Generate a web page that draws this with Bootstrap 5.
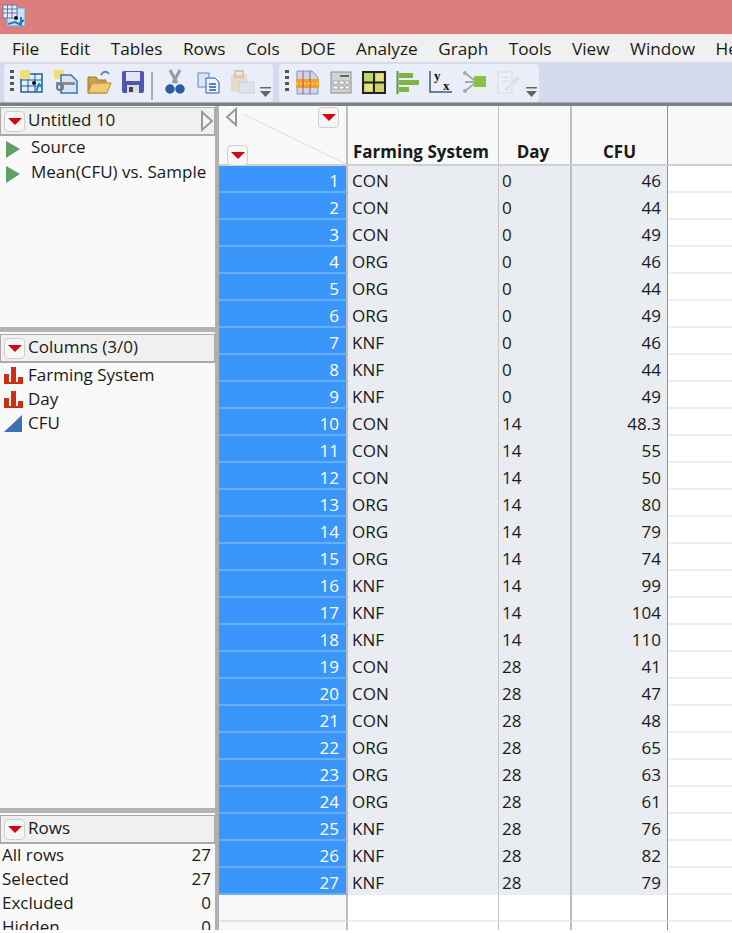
<!doctype html>
<html lang="en">
<head>
<meta charset="utf-8">
<title>Untitled 10</title>
<link href="https://cdn.jsdelivr.net/npm/bootstrap@5.3.0/dist/css/bootstrap.min.css" rel="stylesheet">
<style>
html,body{height:933px;overflow:hidden}
body{font-family:"Open Sans","Noto Sans","Liberation Sans",sans-serif;font-size:17px;color:#1a1a1a;background:#fff;width:732px}
.titlebar{height:34px;background:#de7d7d;padding:4px 0 0 2px}
.menubar{height:28px;background:#f0f0f0;padding-left:12px;gap:20.5px;font-size:17.2px;line-height:30px;white-space:nowrap;overflow:hidden}
.toolstrip{height:42px;background:#d5dbec;padding:2px 0 0 4px;gap:6px;border-bottom:2px solid #a3abcf}
.toolgroup{height:38px;background:#eaeef8;border-radius:4px;padding:5px 0 0 4px;position:relative}
.grip{width:4px;height:24px;margin:1px 5px 0 2px;background:repeating-linear-gradient(#555 0 3px,transparent 3px 6px)}
.tico{width:26px;height:26px;display:block;flex:none}
.tgap{margin-right:7.5px}
.overflowmark{width:18px;align-self:flex-end;padding:0 0 3px 4px;height:15px;flex:none}
.sep{width:2px;height:28px;background:#a9adb5;margin:0 9.500px 0 5px}
.mainarea{height:827px;border-top:3px solid #7f7f7f;margin-top:-1px;overflow:hidden}
.leftpane{width:215px;flex:none;background:#f9f9f9}
.splitv{width:4px;flex:none;background:#b0b0b0}
.splith{height:5px;flex:none;background:#b4b4b4}
.panelhead{height:29px;flex:none;background:#f0f0f0;border:1px solid #aaa;border-bottom-width:2px;font-size:17px;line-height:24px;padding:0 0 0 3px;gap:3px;margin-top:2px}
.panelfirst{margin-top:1px}
.redbtn{width:21px;height:21px;flex:none;background:#f7f5f5;border:1px solid #cfcfcf;border-radius:4px;display:flex;align-items:center;justify-content:center}
.redbtn::after{content:"";border:7px solid transparent;border-top:7px solid #d4070f;border-bottom:0}
.tree1{height:191px;flex:none}
.tree2{height:445px;flex:none}
.itemrow{height:24px;line-height:22px;gap:5px;padding-left:4px;white-space:nowrap}
.treerow{height:25px}
.liftup{padding-bottom:3px}
.statrow{height:24px;line-height:22px;padding:0 4px 0 2px;flex:none}
.gridwrap{flex:1;min-width:0;position:relative}
.headrow{height:60px;background:#f8f8f8;border-bottom:2px solid #cfcfcf}
.datarow{height:27px;line-height:30px}
.c0{width:129px;flex:none;border-right:2px solid #bdbdbd}
.c1{width:151px;flex:none;border-right:1px solid #c4c4c4;padding-left:4px}
.c2{width:73px;flex:none;border-right:2px solid #bdbdbd;padding-left:3px}
.c3{width:96px;flex:none;border-right:1px solid #8f8f8f;text-align:right;padding-right:6px}
.c4{flex:1;border-bottom:2px solid #eeeeee}
.headrow .c0{position:relative}
.headrow .c1,.headrow .c2,.headrow .c3{background:#f8f8f8;font-weight:700;font-size:17px;align-self:stretch;display:flex;align-items:flex-end;justify-content:center;padding:0;line-height:24px;white-space:nowrap}
.headrow .c1{padding-right:4px}
.headrow .c2{padding-right:3px}
.headrow .c4{border:0}
.rownum{background:#3b96fb;color:#fff;text-align:right;padding-right:7px;border-bottom:2px solid #69aef8;border-right-color:#bdbdbd}
.datarow .c1,.datarow .c2,.datarow .c3{background:#e9ecf0}
.blankrow .c0{background:#f8f8f8;border-bottom:2px solid #e3e3e3}
.datarow.blankrow .c1,.datarow.blankrow .c2,.datarow.blankrow .c3{background:#fff;border-bottom:2px solid #eeeeee}
.diag{position:absolute;left:0;top:0;width:127px;height:58px}
.corner-a{position:absolute;left:8px;top:39px}
.corner-b{position:absolute;right:7px;top:1px}
.svgletter{font-family:"Liberation Serif",serif;font-weight:700;font-size:13px;fill:#111}
</style>
</head>
<body>
<div class="titlebar">
<svg class="d-block" width="24" height="24" viewBox="0 0 24 24"><rect x="5" y="4" width="18" height="18" fill="#cfe2f5" stroke="#7d9cc4"/><rect x="1" y="1" width="14" height="13" fill="#e8eef8" stroke="#5c7aa8"/><path d="M1 5h14M1 9h14M5.500 1v13M10 1v13" stroke="#5c7aa8"/><circle cx="14" cy="14" r="2" fill="#111"/><path d="M6 20l7-2 4 2 5-4" stroke="#1f7fc4" stroke-width="2" fill="none"/><path d="M19 13v9" stroke="#1f7fc4" stroke-width="2"/></svg>
</div>
<div class="menubar d-flex"><span>File</span><span>Edit</span><span>Tables</span><span>Rows</span><span>Cols</span><span>DOE</span><span>Analyze</span><span>Graph</span><span>Tools</span><span>View</span><span>Window</span><span>Help</span></div>
<div class="toolstrip d-flex">
 <div class="toolgroup d-flex">
  <div class="grip"></div>
  <svg class="tico tgap" viewBox="0 0 26 26"><rect x="2" y="5" width="21" height="18" fill="#e6eef8" stroke="#1e5f9e" stroke-width="1.500"/><path d="M2 11h21M2 17h21M9 5v18M16 5v18" stroke="#1e5f9e"/><rect x="1" y="1" width="10" height="9" fill="#f2dd78"/><circle cx="15" cy="14" r="2" fill="#111"/><path d="M17 23l3-8 3 3" stroke="#1f7fc4" stroke-width="2" fill="none"/></svg>
  <svg class="tico tgap" viewBox="0 0 26 26"><rect x="1" y="1" width="10" height="9" fill="#f2dd78"/><path d="M8 6h10l6 6v12H8z" fill="#d6e6f5" stroke="#3478ad" stroke-width="1.500"/><rect x="3" y="13" width="19" height="3" fill="#8c8c8c"/><circle cx="7" cy="18" r="3" fill="none" stroke="#777" stroke-width="2"/></svg>
  <svg class="tico tgap" viewBox="0 0 26 26"><path d="M2 24V8h8l2 3h8v13z" fill="#c9a24a" stroke="#9a7a30"/><path d="M2 24l4-10h19l-4 10z" fill="#f0cb73" stroke="#b08d3c"/><path d="M15 6c2-4 6-4 8-1" stroke="#5f86b5" stroke-width="2" fill="none"/></svg>
  <svg class="tico" viewBox="0 0 26 26"><rect x="2" y="2" width="22" height="22" rx="2" fill="#4f55b8"/><rect x="6" y="3" width="14" height="9" fill="#e6e6f2"/><rect x="7" y="16" width="12" height="8" fill="#dcdcdc"/><rect x="9" y="18" width="4" height="5" fill="#444"/></svg>
  <div class="sep align-self-center"></div>
  <svg class="tico tgap" viewBox="0 0 26 26"><path d="M8 1l7 13M18 1l-7 13" stroke="#8d9bb0" stroke-width="3"/><circle cx="8" cy="20" r="3.500" fill="#2a5ba8" stroke="#2a5ba8" stroke-width="2.500"/><circle cx="18" cy="20" r="3.500" fill="#2a5ba8" stroke="#2a5ba8" stroke-width="2.500"/></svg>
  <svg class="tico tgap" viewBox="0 0 26 26"><path d="M2 4h11v14H2z" fill="#dbe6f6" stroke="#5c86c0"/><path d="M10 9h9l4 4v11H10z" fill="#eef3fb" stroke="#2a5ba8"/><path d="M13 15h7M13 18h7M13 21h7" stroke="#2a5ba8" stroke-width="1.500"/></svg>
  <svg class="tico" viewBox="0 0 26 26"><rect x="2" y="5" width="16" height="18" rx="2" fill="#e6dcc4"/><rect x="6" y="2" width="8" height="6" fill="none" stroke="#d4c9b0" stroke-width="2"/><rect x="10" y="13" width="15" height="11" fill="#dfe3ea" stroke="#ccd"/></svg>
  <svg class="overflowmark" viewBox="0 0 14 12"><rect x="1" y="0" width="11" height="1.500" fill="#666"/><path d="M1 4h11l-5.500 6z" fill="#666"/></svg>
 </div>
 <div class="toolgroup d-flex">
  <div class="grip"></div>
  <svg class="tico tgap" viewBox="0 0 26 26"><path d="M3 2h15l6 6v17H3z" fill="#c9d6ec" stroke="#7d96c4"/><path d="M2 10h23v9H2z" fill="#f0a030"/><path d="M9 2v23M16 2v23" stroke="#c05555"/><path d="M2 14.500h23" stroke="#f3d26a" stroke-dasharray="2 2" stroke-width="2"/></svg>
  <svg class="tico tgap" viewBox="0 0 26 26"><rect x="3" y="3" width="20" height="21" fill="#d2d2d2" stroke="#8a8a8a"/><rect x="12" y="6" width="9" height="2" fill="#666"/><path d="M5 12h5v3H5zM11 12h5v3h-5zM17 12h4v3h-4zM5 17h5v3H5zM11 17h5v3h-5zM17 17h4v3h-4z" fill="#fafafa" stroke="#777" stroke-width=".5"/></svg>
  <svg class="tico tgap" viewBox="0 0 26 26"><rect x="2" y="3" width="22" height="21" fill="#c6d36a" stroke="#222" stroke-width="2"/><path d="M13 3v21M2 13.500h22" stroke="#222" stroke-width="2"/><rect x="15" y="5" width="7" height="7" fill="#e8e27a"/><rect x="4" y="15" width="7" height="7" fill="#e8e27a"/></svg>
  <svg class="tico tgap" viewBox="0 0 26 26"><path d="M2.500 2v23" stroke="#5d9a38" stroke-width="2"/><rect x="4" y="4" width="14" height="5" fill="#7eb445"/><rect x="4" y="11" width="20" height="5" fill="#7eb445"/><rect x="4" y="18" width="10" height="5" fill="#7eb445"/></svg>
  <svg class="tico tgap" viewBox="0 0 26 26"><path d="M2 2v21h22" fill="none" stroke="#3b5a86" stroke-width="1.500"/><text class="svgletter" x="6" y="11">y</text><text class="svgletter" x="15" y="21">x</text></svg>
  <svg class="tico tgap" viewBox="0 0 26 26"><rect x="12" y="7" width="12" height="11" fill="#8bbf3e"/><path d="M3 4l9 7M3 13h9M3 22l9-7" stroke="#a5a9b3" stroke-width="2"/><circle cx="3" cy="4" r="2" fill="#a5a9b3"/><circle cx="3" cy="22" r="2" fill="#a5a9b3"/></svg>
  <svg class="tico" viewBox="0 0 26 26"><rect x="3" y="3" width="14" height="21" fill="#eceff4" stroke="#d6d9de"/><path d="M7 8h7M7 12h7" stroke="#d6d9de"/><path d="M9 20l13-13 3 3-14 12z" fill="#dfe2e6"/></svg>
  <svg class="overflowmark" viewBox="0 0 14 12"><rect x="1" y="0" width="11" height="1.500" fill="#666"/><path d="M1 4h11l-5.500 6z" fill="#666"/></svg>
 </div>
</div>
<div class="mainarea d-flex">
 <div class="leftpane d-flex flex-column">
  <div class="panelhead panelfirst d-flex align-items-center"><span class="redbtn"></span><span class="flex-grow-1 liftup">Untitled 10</span><svg width="14" height="22" viewBox="0 0 14 22"><path d="M2 2l10 9-10 9z" fill="#f4f4f4" stroke="#999" stroke-width="2"/></svg></div>
  <div class="tree1">
   <div class="itemrow treerow d-flex align-items-center"><svg width="18" height="20" viewBox="0 0 18 20"><path d="M2 2l14 8-14 9z" fill="#5f9f63"/></svg><span class="ms-1 liftup">Source</span></div>
   <div class="itemrow treerow d-flex align-items-center"><svg width="18" height="20" viewBox="0 0 18 20"><path d="M2 2l14 8-14 9z" fill="#5f9f63"/></svg><span class="ms-1 liftup">Mean(CFU) vs. Sample</span></div>
  </div>
  <div class="splith"></div>
  <div class="panelhead d-flex align-items-center"><span class="redbtn"></span><span class="liftup">Columns (3/0)</span></div>
  <div class="tree2">
   <div class="itemrow d-flex align-items-center"><svg width="19" height="18" viewBox="0 0 19 18"><path d="M0 8h5v10H0zM7 1h5v17H7zM14 11h5v7h-5zM0 16h19v2H0z" fill="#cc2f12"/></svg><span>Farming System</span></div>
   <div class="itemrow d-flex align-items-center"><svg width="19" height="18" viewBox="0 0 19 18"><path d="M0 8h5v10H0zM7 1h5v17H7zM14 11h5v7h-5zM0 16h19v2H0z" fill="#cc2f12"/></svg><span>Day</span></div>
   <div class="itemrow d-flex align-items-center"><svg width="19" height="18" viewBox="0 0 19 18"><path d="M0 18L18 1v17z" fill="#3d6fb8"/></svg><span>CFU</span></div>
  </div>
  <div class="splith"></div>
  <div class="panelhead d-flex align-items-center"><span class="redbtn"></span><span class="liftup">Rows</span></div>
  <div class="statrow d-flex justify-content-between"><span>All rows</span><span>27</span></div>
  <div class="statrow d-flex justify-content-between"><span>Selected</span><span>27</span></div>
  <div class="statrow d-flex justify-content-between"><span>Excluded</span><span>0</span></div>
  <div class="statrow d-flex justify-content-between"><span>Hidden</span><span>0</span></div>
 </div>
 <div class="splitv"></div>
 <div class="gridwrap">
  <div class="headrow d-flex">
   <div class="c0"><svg class="diag" viewBox="0 0 127 58"><path d="M24 8L127 58" stroke="#ddd"/><path d="M17 3L8 11l9 8z" fill="#f4f4f4" stroke="#999" stroke-width="2"/></svg><span class="redbtn corner-a"></span><span class="redbtn corner-b"></span></div>
   <div class="c1">Farming System</div><div class="c2">Day</div><div class="c3">CFU</div><div class="c4"></div>
  </div>
  <div class="datarow d-flex"><div class="c0 rownum">1</div><div class="c1">CON</div><div class="c2">0</div><div class="c3">46</div><div class="c4"></div></div>
  <div class="datarow d-flex"><div class="c0 rownum">2</div><div class="c1">CON</div><div class="c2">0</div><div class="c3">44</div><div class="c4"></div></div>
  <div class="datarow d-flex"><div class="c0 rownum">3</div><div class="c1">CON</div><div class="c2">0</div><div class="c3">49</div><div class="c4"></div></div>
  <div class="datarow d-flex"><div class="c0 rownum">4</div><div class="c1">ORG</div><div class="c2">0</div><div class="c3">46</div><div class="c4"></div></div>
  <div class="datarow d-flex"><div class="c0 rownum">5</div><div class="c1">ORG</div><div class="c2">0</div><div class="c3">44</div><div class="c4"></div></div>
  <div class="datarow d-flex"><div class="c0 rownum">6</div><div class="c1">ORG</div><div class="c2">0</div><div class="c3">49</div><div class="c4"></div></div>
  <div class="datarow d-flex"><div class="c0 rownum">7</div><div class="c1">KNF</div><div class="c2">0</div><div class="c3">46</div><div class="c4"></div></div>
  <div class="datarow d-flex"><div class="c0 rownum">8</div><div class="c1">KNF</div><div class="c2">0</div><div class="c3">44</div><div class="c4"></div></div>
  <div class="datarow d-flex"><div class="c0 rownum">9</div><div class="c1">KNF</div><div class="c2">0</div><div class="c3">49</div><div class="c4"></div></div>
  <div class="datarow d-flex"><div class="c0 rownum">10</div><div class="c1">CON</div><div class="c2">14</div><div class="c3">48.3</div><div class="c4"></div></div>
  <div class="datarow d-flex"><div class="c0 rownum">11</div><div class="c1">CON</div><div class="c2">14</div><div class="c3">55</div><div class="c4"></div></div>
  <div class="datarow d-flex"><div class="c0 rownum">12</div><div class="c1">CON</div><div class="c2">14</div><div class="c3">50</div><div class="c4"></div></div>
  <div class="datarow d-flex"><div class="c0 rownum">13</div><div class="c1">ORG</div><div class="c2">14</div><div class="c3">80</div><div class="c4"></div></div>
  <div class="datarow d-flex"><div class="c0 rownum">14</div><div class="c1">ORG</div><div class="c2">14</div><div class="c3">79</div><div class="c4"></div></div>
  <div class="datarow d-flex"><div class="c0 rownum">15</div><div class="c1">ORG</div><div class="c2">14</div><div class="c3">74</div><div class="c4"></div></div>
  <div class="datarow d-flex"><div class="c0 rownum">16</div><div class="c1">KNF</div><div class="c2">14</div><div class="c3">99</div><div class="c4"></div></div>
  <div class="datarow d-flex"><div class="c0 rownum">17</div><div class="c1">KNF</div><div class="c2">14</div><div class="c3">104</div><div class="c4"></div></div>
  <div class="datarow d-flex"><div class="c0 rownum">18</div><div class="c1">KNF</div><div class="c2">14</div><div class="c3">110</div><div class="c4"></div></div>
  <div class="datarow d-flex"><div class="c0 rownum">19</div><div class="c1">CON</div><div class="c2">28</div><div class="c3">41</div><div class="c4"></div></div>
  <div class="datarow d-flex"><div class="c0 rownum">20</div><div class="c1">CON</div><div class="c2">28</div><div class="c3">47</div><div class="c4"></div></div>
  <div class="datarow d-flex"><div class="c0 rownum">21</div><div class="c1">CON</div><div class="c2">28</div><div class="c3">48</div><div class="c4"></div></div>
  <div class="datarow d-flex"><div class="c0 rownum">22</div><div class="c1">ORG</div><div class="c2">28</div><div class="c3">65</div><div class="c4"></div></div>
  <div class="datarow d-flex"><div class="c0 rownum">23</div><div class="c1">ORG</div><div class="c2">28</div><div class="c3">63</div><div class="c4"></div></div>
  <div class="datarow d-flex"><div class="c0 rownum">24</div><div class="c1">ORG</div><div class="c2">28</div><div class="c3">61</div><div class="c4"></div></div>
  <div class="datarow d-flex"><div class="c0 rownum">25</div><div class="c1">KNF</div><div class="c2">28</div><div class="c3">76</div><div class="c4"></div></div>
  <div class="datarow d-flex"><div class="c0 rownum">26</div><div class="c1">KNF</div><div class="c2">28</div><div class="c3">82</div><div class="c4"></div></div>
  <div class="datarow d-flex"><div class="c0 rownum">27</div><div class="c1">KNF</div><div class="c2">28</div><div class="c3">79</div><div class="c4"></div></div>
  <div class="datarow blankrow d-flex"><div class="c0"></div><div class="c1"></div><div class="c2"></div><div class="c3"></div><div class="c4"></div></div>
  <div class="datarow blankrow d-flex"><div class="c0"></div><div class="c1"></div><div class="c2"></div><div class="c3"></div><div class="c4"></div></div>
 </div>
</div>
<script src="https://cdn.jsdelivr.net/npm/bootstrap@5.3.0/dist/js/bootstrap.bundle.min.js"></script>
</body>
</html>
